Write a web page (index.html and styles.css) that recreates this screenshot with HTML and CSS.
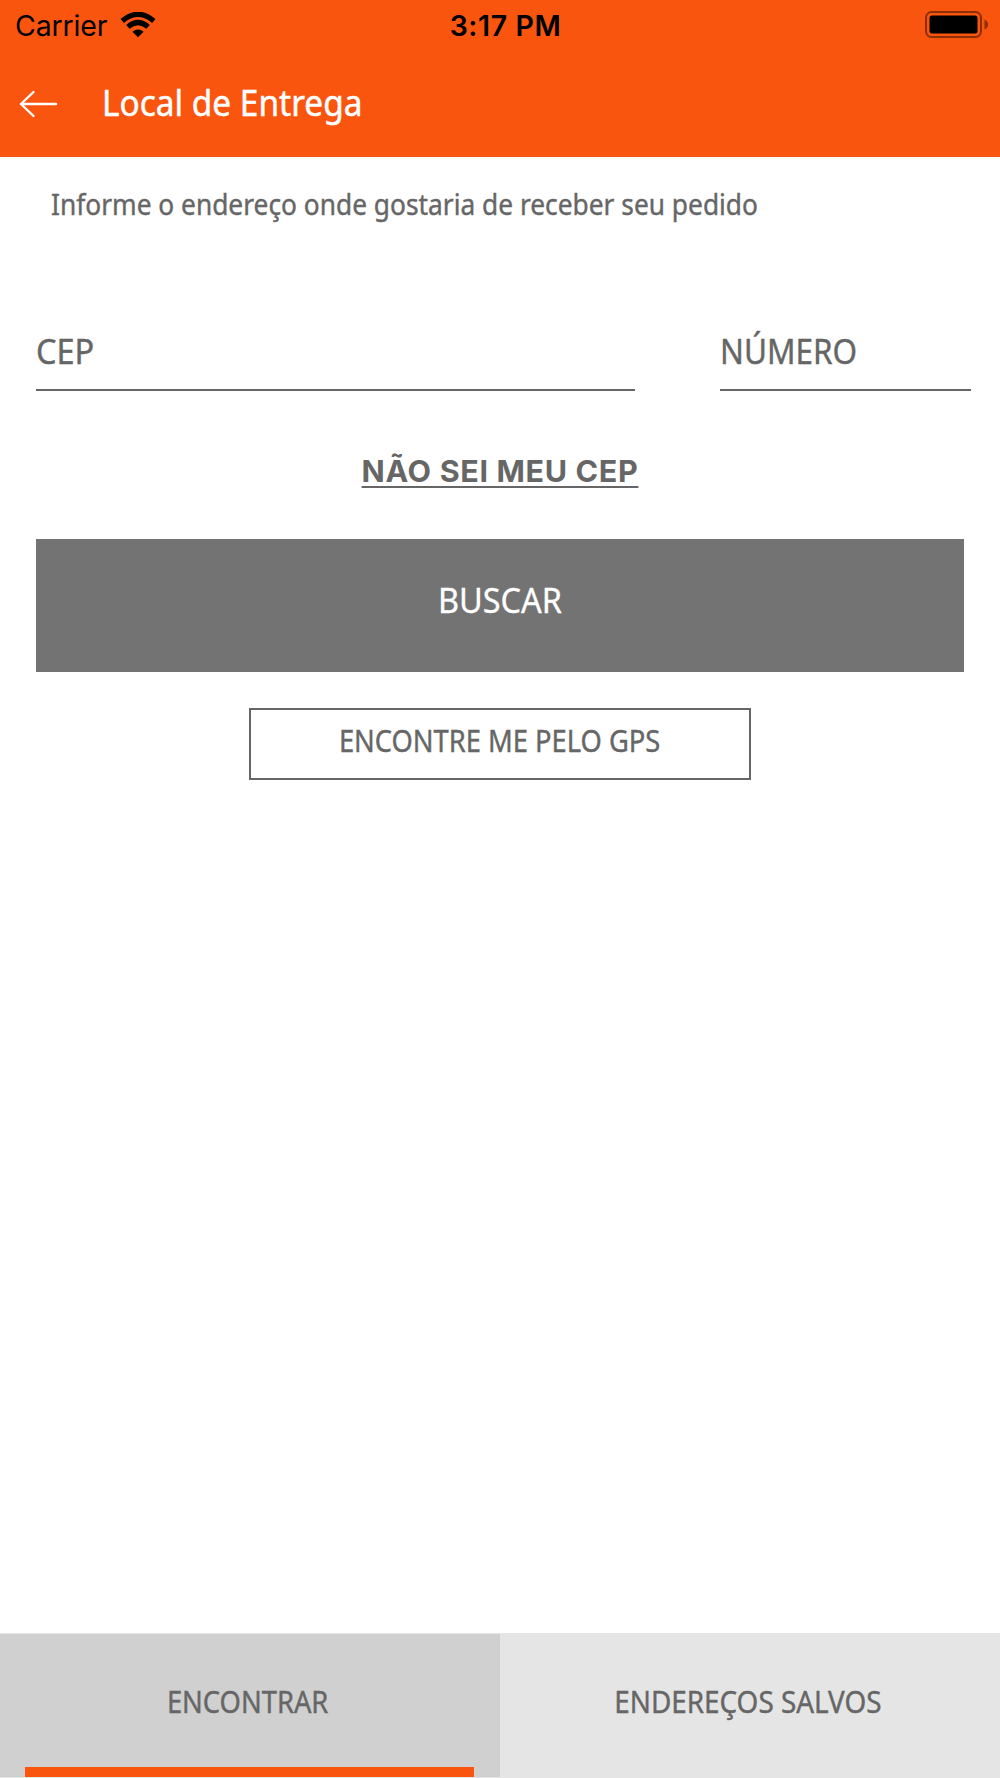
FILE: index.html
```html
<!DOCTYPE html>
<html lang="pt-BR">

<head>
    <meta charset="utf-8">
    <title>Local de Entrega</title>
    <meta name="viewport" content="width=device-width, initial-scale=1.0">
    <link rel="stylesheet" href="styles.css">
</head>

<body>
    <div class="screen">
        <header class="header">
            <div class="status-bar">
                <div class="carrier">
                    <span>Carrier</span>
                    <svg class="wifi" width="36" height="26" viewBox="0 0 36 26">
                        <path d="M18 25.2 L12.4 19.8 Q18 15.2 23.6 19.8 Z" />
                        <path class="wave" d="M7.9 14.9 Q18 6.2 28.1 14.9" />
                        <path class="wave" d="M2.2 8.9 Q18 -4.1 33.8 8.9" />
                    </svg>
                </div>
                <div class="clock">3:17 PM</div>
                <div class="battery">
                    <svg width="64" height="28" viewBox="0 0 64 28">
                        <rect class="battery-case" x="1" y="1" width="55" height="25" rx="5.5" />
                        <rect x="4.5" y="4.5" width="48" height="18" rx="2.5" />
                        <path class="battery-tip" d="M59.5 8.5 Q63 10 63 13.5 Q63 17 59.5 18.5 Z" />
                    </svg>
                </div>
            </div>
            <div class="nav">
                <svg class="back" width="39" height="30" viewBox="0 0 39 30">
                    <path d="M37 15 H2 M14.5 3 L2 15 L14.5 27" />
                </svg>
                <h1 class="title">Local de Entrega</h1>
            </div>
        </header>

        <main class="content">
            <p class="intro">Informe o endereço onde gostaria de receber seu pedido</p>

            <div class="fields">
                <div class="field field-cep"><span>CEP</span></div>
                <div class="field field-numero"><span>NÚMERO</span></div>
            </div>

            <a class="no-cep">NÃO SEI MEU CEP</a>

            <div class="button-search"><span>BUSCAR</span></div>
            <div class="button-gps"><span>ENCONTRE ME PELO GPS</span></div>
        </main>

        <nav class="tabs">
            <div class="tab tab-active"><span>ENCONTRAR</span></div>
            <div class="tab tab-saved"><span>ENDEREÇOS SALVOS</span></div>
        </nav>
    </div>
</body>

</html>
```
FILE: styles.css
```css
/* Basic styling */
* {
    box-sizing: border-box;
}

body {
    margin: 0;
    background-color: #fff;
    font-family: "Noto Sans", sans-serif;
    color: #666;
}

.screen {
    display: flex;
    flex-direction: column;
    width: 1000px;
    height: 1778px;
    overflow: hidden;
}

/* Header */
.header {
    height: 157px;
    background-color: #fa550f;
}

.status-bar {
    display: grid;
    grid-template-columns: 1fr auto 1fr;
    align-items: center;
    height: 50px;
    padding: 0 11px 0 15px;
    font-family: "Inter", sans-serif;
    font-size: 28.5px;
    color: #000;
}

.carrier {
    display: flex;
    align-items: center;
    gap: 13px;
    letter-spacing: -0.15px;
}

.wifi .wave {
    fill: none;
    stroke: #000;
    stroke-width: 5.2;
}

.clock {
    padding-left: 7px;
    font-weight: 600;
    letter-spacing: 0.6px;
}

.battery {
    display: flex;
    justify-content: flex-end;
}

.battery-case {
    fill: none;
    stroke: #8c3008;
    stroke-width: 2;
}

.battery-tip {
    fill: #8c3008;
}

.nav {
    display: flex;
    align-items: center;
    height: 107px;
    padding-left: 19px;
}

.back {
    fill: none;
    stroke: #fff;
    stroke-width: 2.4;
    stroke-linecap: round;
    stroke-linejoin: round;
}

.title {
    margin: 0 0 2px 44px;
    font-size: 36px;
    font-weight: 400;
    color: #fff;
    transform: scaleX(0.928);
    transform-origin: left;
    -webkit-text-stroke: 0.5px;
}

/* Address form */
.content {
    flex: 1;
    display: flex;
    flex-direction: column;
    align-items: center;
    padding: 27px 36px 0;
}

.intro {
    align-self: flex-start;
    margin: 0 0 107px 15px;
    font-size: 29.5px;
    line-height: 40px;
    white-space: nowrap;
    transform: scaleX(0.892);
    transform-origin: left;
    -webkit-text-stroke: 0.4px;
}

.fields {
    display: flex;
    gap: 85px;
    align-self: flex-start;
    margin-bottom: 60px;
}

.field {
    height: 60px;
    border-bottom: 2px solid #666;
    font-size: 34px;
    line-height: 40px;
}

.field span {
    display: inline-block;
    transform: scaleX(0.925);
    transform-origin: left;
    -webkit-text-stroke: 0.4px;
}

.field-cep {
    width: 599px;
}

.field-cep span {
    transform: scaleX(0.955);
}

.field-numero {
    width: 251px;
}

.no-cep {
    margin-bottom: 48px;
    font-family: "Inter", sans-serif;
    font-size: 30.5px;
    font-weight: 700;
    line-height: 40px;
    letter-spacing: 0.65px;
    text-decoration: underline 2px;
    text-underline-offset: 4px;
    text-decoration-skip-ink: none;
}

.button-search {
    display: flex;
    align-items: center;
    justify-content: center;
    width: 928px;
    height: 133px;
    margin-bottom: 36px;
    padding-bottom: 11px;
    background-color: #737373;
    font-size: 34px;
    color: #fff;
}

.button-search span {
    transform: scaleX(0.955);
    -webkit-text-stroke: 0.3px;
}

.button-gps {
    display: flex;
    align-items: center;
    justify-content: center;
    width: 502px;
    height: 72px;
    padding-bottom: 7px;
    border: 2px solid #666;
    font-size: 30px;
}

.button-gps span {
    transform: scaleX(0.91);
    -webkit-text-stroke: 0.4px;
}

/* Bottom tabs */
.tabs {
    display: flex;
    height: 145px;
    padding: 1px 0;
    background-color: #e5e5e5;
}

.tab {
    display: flex;
    align-items: center;
    justify-content: center;
    width: 500px;
    padding: 0 4px 9px 0;
    font-size: 30px;
    -webkit-text-stroke: 0.4px;
}

.tab-active {
    position: relative;
    background-color: #d0d0d0;
}

.tab-active span {
    transform: scaleX(0.911);
}

.tab-saved span {
    transform: scaleX(0.929);
}

/* Marker under the selected tab */
.tab-active::after {
    content: "";
    position: absolute;
    left: 25px;
    bottom: 0;
    width: 449px;
    height: 10px;
    background-color: #fa550f;
}
```
